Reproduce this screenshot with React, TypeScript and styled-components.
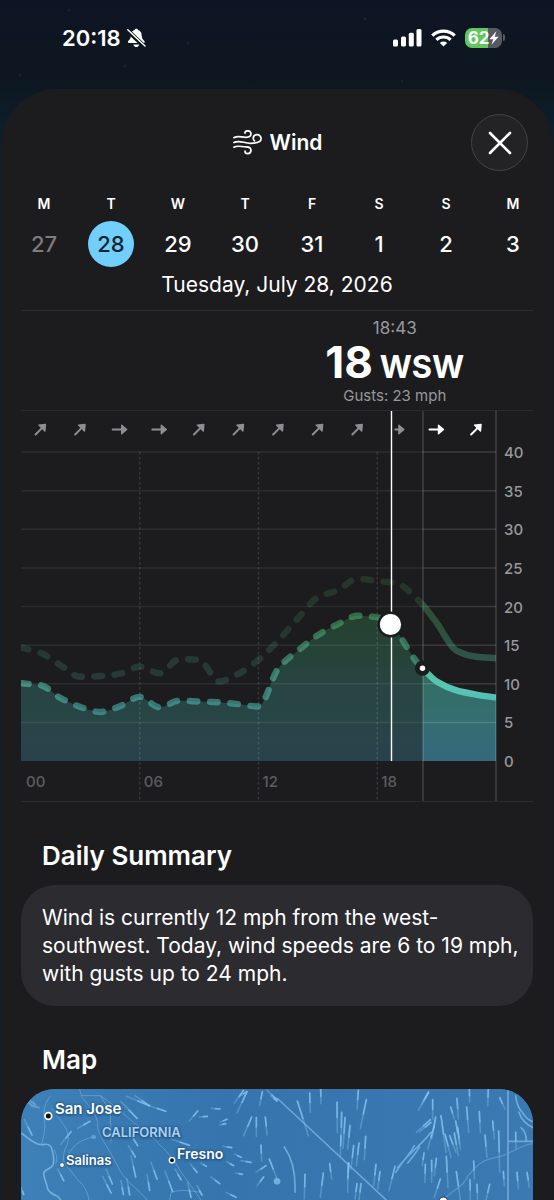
import React from "react";
import styled, { createGlobalStyle } from "styled-components";

const colors = {
  sheet: "#1c1c1e",
  card: "#2c2b30",
  text: "#ffffff",
  muted: "#98989d",
  faint: "#5c5c60",
  line: "#2b2b2e",
  accent: "#70cffb",
};

const GlobalStyle = createGlobalStyle`
  *, *::before, *::after { box-sizing: border-box; }
  html, body { margin: 0; padding: 0; background: #0e1722; }
  body {
    font-family: Inter, "Liberation Sans", sans-serif;
    color: ${colors.text};
    -webkit-font-smoothing: antialiased;
  }
  h1, h2, p { margin: 0; }
  button { font: inherit; color: inherit; background: none; border: 0; padding: 0; }
`;

const Screen = styled.div`
  display: flex;
  flex-direction: column;
  min-height: 100vh;
  overflow: hidden;
  background:
    radial-gradient(circle at 69px 10px, #1d2a3a 0, transparent 2px),
    radial-gradient(circle at 188px 43px, #1d2d3a 0, transparent 2px),
    radial-gradient(circle at 20px 75px, #1c2c36 0, transparent 2px),
    radial-gradient(circle at 125px 66px, #1a2a36 0, transparent 2px),
    radial-gradient(circle at 365px 19px, #1d2a3a 0, transparent 2px),
    radial-gradient(circle at 402px 81px, #182a36 0, transparent 2px),
    linear-gradient(#0f1424 0, #0d1720 80px, #0c1f2b 130px, #0c1f2b 100%);
`;

const StatusBar = styled.header`
  display: flex;
  flex: none;
  align-items: center;
  justify-content: space-between;
  height: 89px;
  padding: 0 49px 14px 62px;
`;

const StatusGroup = styled.div<{ $gap: number }>`
  display: flex;
  align-items: center;
  gap: ${(p) => p.$gap}px;
`;

const Clock = styled.time`
  font-size: 22px;
  line-height: 26px;
  font-weight: 600;
`;

const Sheet = styled.main`
  flex: 1;
  display: flex;
  flex-direction: column;
  margin: 0 1px;
  padding: 0 20px;
  border-radius: 56px 56px 0 0;
  background: ${colors.sheet};
`;

const TitleBar = styled.div`
  display: grid;
  grid-template-columns: 1fr auto 1fr;
  align-items: center;
  padding: 25px 5px 0 6px;
`;

const Title = styled.h1`
  grid-column: 2;
  display: flex;
  align-items: center;
  gap: 8px;
  font-size: 21px;
  line-height: 28px;
  font-weight: 600;
`;

const CloseButton = styled.button`
  justify-self: end;
  display: grid;
  place-items: center;
  width: 57px;
  height: 57px;
  border: 1px solid #434346;
  border-radius: 50%;
  background: #232325;
`;

const Week = styled.div`
  display: flex;
  justify-content: space-between;
  margin: 0 -3px 0 0;
  padding-top: 24px;
`;

const Day = styled.button<{ $past?: boolean }>`
  display: flex;
  flex-direction: column;
  align-items: center;
  gap: 8px;
  color: ${(p) => (p.$past ? "#7c7c80" : colors.text)};
`;

const Weekday = styled.span`
  font-size: 14px;
  line-height: 18px;
  font-weight: 600;
  color: ${colors.text};
`;

const DayNumber = styled.span<{ $selected?: boolean }>`
  display: grid;
  place-items: center;
  width: 46px;
  height: 46px;
  border-radius: 50%;
  font-size: 22px;
  font-weight: 500;
  background: ${(p) => (p.$selected ? colors.accent : "transparent")};
  color: ${(p) => (p.$selected ? "#14222c" : "inherit")};
`;

const FullDate = styled.p`
  margin-top: 5px;
  text-align: center;
  font-size: 21px;
  line-height: 26px;
`;

const Readout = styled.section`
  display: flex;
  flex-direction: column;
  align-items: center;
  margin-top: 12px;
  padding: 7px 0 4px 46%;
  border-top: 1px solid ${colors.line};
`;

const Caption = styled.span<{ $small?: boolean }>`
  font-size: ${(p) => (p.$small ? 15 : 17)}px;
  line-height: 20px;
  color: ${colors.muted};
`;

const Speed = styled.strong`
  display: flex;
  align-items: baseline;
  justify-content: center;
  gap: 7px;
  font-size: 44px;
  line-height: 48px;
  font-weight: 700;
`;

const Direction = styled.span`
  font-size: 31px;
  line-height: 32px;
`;

const ChartSvg = styled.svg`
  display: block;
  width: 100%;
  height: auto;
  flex: none;
  font-size: 15px;
  font-weight: 500;
`;

const SectionTitle = styled.h2`
  margin: 38px 21px 13px;
  font-size: 26px;
  line-height: 32px;
  font-weight: 600;
`;

const Card = styled.p`
  padding: 19px 12px 18px 21px;
  border-radius: 34px;
  background: ${colors.card};
  font-size: 21px;
  line-height: 28px;
`;

const MapCard = styled.section`
  position: relative;
  flex: 1;
  min-height: 111px;
  overflow: hidden;
  border-radius: 34px 34px 0 0;
  background: #3776ae;
`;

const MapSvg = styled.svg`
  display: block;
  width: 100%;
  height: 111px;
  min-height: 100%;
`;

const Place = styled.span<{ $x: number; $y: number; $size: number; $state?: boolean }>`
  position: absolute;
  left: ${(p) => p.$x}px;
  top: ${(p) => p.$y}px;
  font-size: ${(p) => p.$size}px;
  line-height: 18px;
  font-weight: 600;
  color: ${(p) => (p.$state ? "#a9d3f4" : "#ffffff")};
  text-shadow: 0 0 3px #1d4a76, 0 1px 3px #1d4a76;
`;

/* ---------- status icons ---------- */

const BellOff = () => (
  <svg width="19" height="20" viewBox="0 0 19 20" aria-label="Silent">
    <path
      d="M9.300 .7c-.9 0-1.500.5-1.700 1.300C5 2.800 4 5 3.900 7.300c-.1 2.700-.8 4-2.200 5.300-.5.5-.8.9-.8 1.400 0 .7.500 1.100 1.300 1.100h14.200c.8 0 1.300-.4 1.300-1.100 0-.5-.3-.9-.8-1.400-1.400-1.300-2.100-2.600-2.200-5.300C14.600 5 13.600 2.800 11 2 10.800 1.200 10.200.7 9.300.7z"
      fill="#fff"
    />
    <path d="M6.400 16.500h5.800c-.3 1.500-1.400 2.600-2.900 2.600s-2.600-1.100-2.900-2.600z" fill="#fff" />
    <path d="M-.5 1.500 18 19" stroke="#0e1622" strokeWidth="4.400" />
    <path d="M.8 1.800 18 18" stroke="#fff" strokeWidth="1.500" strokeLinecap="round" />
  </svg>
);

const Signal = () => (
  <svg width="29" height="18" viewBox="0 0 29 18" fill="#fff" aria-label="Signal">
    <rect x="0" y="10.500" width="5" height="7" rx="1.500" />
    <rect x="8" y="7.500" width="5" height="10" rx="1.500" />
    <rect x="15.800" y="3.800" width="5" height="13.700" rx="1.500" />
    <rect x="23.500" y="0" width="5" height="17.500" rx="1.500" />
  </svg>
);

const Wifi = () => (
  <svg width="25" height="18" viewBox="0 0 25 18" fill="none" stroke="#fff" strokeWidth="3.200" aria-label="Wi-Fi">
    <path d="M1.300 6.600a16 16 0 0 1 22.400 0" />
    <path d="M5.400 10.900a10.200 10.200 0 0 1 14.200 0" />
    <path d="M12.500 17.600 8.800 13.900a5.400 5.400 0 0 1 7.400 0z" fill="#fff" stroke="none" />
  </svg>
);

const BatteryShell = styled.div`
  display: flex;
  align-items: center;
  justify-content: center;
  width: 37px;
  height: 20px;
  border-radius: 7px;
  background: linear-gradient(90deg, #5fc95c 62%, #56595f 62%);
  font-size: 17px;
  line-height: 20px;
  font-weight: 700;
`;

const BatteryWrap = styled.div`
  display: flex;
  align-items: center;
  gap: 1px;
`;

const BatteryTip = styled.span`
  width: 2px;
  height: 7px;
  border-radius: 0 2px 2px 0;
  background: #56595f;
`;

const Battery = () => (
  <BatteryWrap>
    <BatteryShell>
      62
      <svg width="10" height="14" viewBox="0 0 10 14" aria-hidden="true">
        <path d="M7.400.3.400 8.200h3.900L2.400 13.700 9.600 5.800H5.600z" fill="#fff" />
      </svg>
    </BatteryShell>
    <BatteryTip />
  </BatteryWrap>
);

const WindIcon = () => (
  <svg width="29" height="25" viewBox="0 0 29 25" fill="none" stroke="#fff" strokeWidth="1.700" strokeLinecap="round" aria-hidden="true">
    <path d="M.9 7.700C5.300 5.200 8.500 7.500 13 7.300c3-.1 5-1.400 5-3.600 0-1.700-1.400-2.900-3.200-2.900-1.600 0-2.800 1-2.800 2.300" />
    <path d="M.9 12.400C6.500 9.800 11 13.300 17.500 13.300c6.500 0 10.600-1.100 10.600-4.800 0-2.200-1.800-3.800-4-3.800s-3.900 1.500-3.900 3.600c0 1.200.5 2 1.300 2.600" />
    <path d="M.9 17.200C5 15 8.500 16.900 13 16.900c2.800 0 5 1.200 5 3.400 0 1.900-1.400 3.300-3.200 3.300-1.600 0-2.800-1-2.800-2.400" />
  </svg>
);

const CloseIcon = () => (
  <svg width="24" height="24" viewBox="0 0 24 24" aria-hidden="true">
    <path d="M2 2 22 22M22 2 2 22" stroke="#fff" strokeWidth="2.600" strokeLinecap="round" />
  </svg>
);

/* ---------- chart ---------- */

type Point = [number, number];

const wind: Point[] = [
  [0, 10.06], [1, 9.8], [2, 8.15], [3, 7], [4, 6.35], [5, 7.1], [6, 8.3], [7, 6.95], [8, 7.8],
  [9, 7.7], [10, 7.6], [11, 7.35], [12, 7.05], [13, 12], [14, 14.3], [15, 16.3], [16, 17.7],
  [17, 18.8], [18, 18.6], [18.7, 17.6], [19, 16.7], [20, 12.8], [20.3, 12], [21, 10.3],
  [22, 9.15], [23, 8.6], [24, 8.2],
];

const gusts: Point[] = [
  [0, 14.7], [1, 14], [2, 12.4], [3, 10.9], [4, 11], [5, 11.3], [6, 12.2], [7, 11.35],
  [8, 13.2], [9, 13.1], [10, 10.3], [11, 11.3], [12, 13.1], [13, 15.6], [14, 18.5], [15, 21.2],
  [16, 22.1], [17, 23.6], [18, 23.3], [19, 23], [20, 21], [20.3, 20.2], [21, 17.9], [22, 14.3],
  [23, 13.5], [24, 13.3],
];

const PLOT_W = 475;
const PLOT_TOP = 42;
const PLOT_BOTTOM = 351;
const CHART_H = 392;
const NOW = 402;
const CURSOR = 370;

const px = (hour: number) => (hour / 24) * PLOT_W;
const py = (mph: number) => PLOT_BOTTOM - (mph / 40) * (PLOT_BOTTOM - PLOT_TOP);

/* Monotone cubic path, so the line never swings past its samples. */
function smooth(points: Point[]): string {
  const p = points.map(([h, v]): Point => [px(h), py(v)]);
  const n = p.length;
  const d = p.slice(1).map((q, i) => (q[1] - p[i][1]) / (q[0] - p[i][0]));
  const m = p.map((_, i) => {
    if (i === 0) return d[0];
    if (i === n - 1) return d[n - 2];
    if (d[i - 1] * d[i] <= 0) return 0;
    return (2 * d[i - 1] * d[i]) / (d[i - 1] + d[i]);
  });
  let out = `M${p[0][0]} ${p[0][1]}`;
  for (let i = 0; i < n - 1; i++) {
    const dx = (p[i + 1][0] - p[i][0]) / 3;
    out += `C${p[i][0] + dx} ${p[i][1] + m[i] * dx} ${p[i + 1][0] - dx} ${p[i + 1][1] - m[i + 1] * dx} ${p[i + 1][0]} ${p[i + 1][1]}`;
  }
  return out;
}

const windPath = smooth(wind);
const gustPath = smooth(gusts);
const areaPath = `${windPath}V${PLOT_BOTTOM}H0Z`;

/* Heading of each two-hour arrow: 0 points east, -45 north-east. */
const headings = [-45, -45, 0, 0, -45, -45, -45, -45, -45, 0, 0, -45];

const Chart = () => (
  <ChartSvg viewBox={`0 0 512 ${CHART_H}`} role="img" aria-label="Wind speed and gusts by hour">
    <defs>
      <linearGradient id="line" gradientUnits="userSpaceOnUse" x1="0" x2="0" y1={py(24)} y2={py(6)}>
        <stop offset="0" stopColor="#4fa85a" />
        <stop offset=".3" stopColor="#4cab69" />
        <stop offset=".6" stopColor="#51b795" />
        <stop offset=".8" stopColor="#58c7b5" />
        <stop offset="1" stopColor="#4cb3b8" />
      </linearGradient>
      <linearGradient id="area" gradientUnits="userSpaceOnUse" x1="0" x2="0" y1={py(19)} y2={PLOT_BOTTOM}>
        <stop offset="0" stopColor="#379358" />
        <stop offset=".3" stopColor="#3c9a74" />
        <stop offset=".5" stopColor="#42a095" />
        <stop offset=".7" stopColor="#43a0a0" />
        <stop offset="1" stopColor="#4497b8" />
      </linearGradient>
      <clipPath id="past"><rect x="0" y="0" width={NOW} height={CHART_H} /></clipPath>
      <clipPath id="future"><rect x={NOW} y="0" width={PLOT_W - NOW} height={CHART_H} /></clipPath>
    </defs>

    <g stroke={colors.line} strokeWidth="1">
      <path d="M0 .5H512M0 391.500H512" />
    </g>

    <path d={areaPath} fill="url(#area)" opacity=".31" clipPath="url(#past)" />
    <path d={areaPath} fill="url(#area)" opacity=".62" clipPath="url(#future)" />

    <g stroke="#fff" strokeOpacity=".075" strokeWidth="1.500">
      {[5, 10, 15, 20, 25, 30, 35, 40].map((v) => (
        <path key={v} d={`M0 ${py(v)}H${PLOT_W}`} />
      ))}
      {[5, 10, 15, 20, 25, 30, 35, 40].map((v) => (
        <path key={v} d={`M${NOW} ${py(v)}H${PLOT_W}`} />
      ))}
    </g>
    <g stroke="#fff" strokeOpacity=".12" strokeWidth="1.500" strokeDasharray="2.500 2.500">
      {[6, 12, 18].map((h) => (
        <path key={h} d={`M${px(h)} ${PLOT_TOP}V390`} />
      ))}
    </g>

    <g fill="none" stroke="url(#line)" strokeWidth="6.400">
      <path d={gustPath} opacity=".18" strokeLinecap="round" strokeDasharray="7.600 12.700" clipPath="url(#past)" />
      <path d={gustPath} opacity=".36" clipPath="url(#future)" />
      <path d={windPath} opacity=".55" strokeLinecap="round" strokeDasharray="7.600 12.700" clipPath="url(#past)" />
      <path d={windPath} clipPath="url(#future)" />
    </g>

    <g stroke="#fff" strokeOpacity=".17" strokeWidth="1.500">
      <path d={`M${NOW} 1V391M${PLOT_W} 1V391`} />
    </g>

    {headings.map((angle, i) => (
      <g
        key={i}
        transform={`translate(${19.5 + i * 39.6} 19.500) rotate(${angle})`}
        fill={i > 9 ? "#fff" : "#8e8e92"}
        stroke={i > 9 ? "#fff" : "#8e8e92"}
        strokeLinecap="round"
        strokeLinejoin="round"
      >
        <path d="M-7 0H3" strokeWidth="2" />
        <path d="M2 -4.200 7 0 2 4.200z" strokeWidth="1.400" />
      </g>
    ))}

    <path d={`M${CURSOR} 10V30`} stroke={colors.sheet} strokeWidth="7" />
    <path d={`M${CURSOR + 0.5} 1V${PLOT_BOTTOM}`} stroke="#fff" strokeWidth="1.400" />
    <circle cx={CURSOR - 0.5} cy="214.500" r="13" fill={colors.sheet} />
    <circle cx={CURSOR - 0.5} cy="214.500" r="10.600" fill="#fff" />
    <circle cx={NOW - 0.5} cy="258.200" r="7.600" fill={colors.sheet} />
    <circle cx={NOW - 0.5} cy="258.200" r="2.700" fill="#fff" />

    <g fill={colors.muted}>
      {[0, 5, 10, 15, 20, 25, 30, 35, 40].map((v) => (
        <text key={v} x="483" y={py(v) + 6}>{v}</text>
      ))}
    </g>
    <g fill={colors.faint}>
      {["00", "06", "12", "18"].map((h, i) => (
        <text key={h} x={px(i * 6) + (i === 0 ? 5 : 4)} y="377">{h}</text>
      ))}
    </g>
  </ChartSvg>
);

/* ---------- map ---------- */

/* Wind streaks as tail x, tail y, head x, head y; the head half is brighter. */
const streaks: number[][] = [
  [317, 22, 385, 50], [342, 20, 385, 50], [300, 38, 348, 88], [385, 50, 434, 67],
  [505, 96, 530, 66], [535, 84, 559, 82], [572, 58, 597, 60], [598, 99, 618, 91],
  [596, 108, 614, 104], [10, 92, 33, 138], [170, 118, 207, 97], [120, 165, 150, 128],
  [325, 130, 350, 170], [450, 150, 505, 169], [322, 170, 343, 204], [330, 200, 344, 264],
  [390, 220, 408, 270], [378, 256, 386, 304], [432, 246, 455, 308], [462, 240, 480, 272],
  [508, 225, 528, 250], [570, 264, 596, 284], [540, 222, 556, 232], [618, 218, 638, 230],
  [640, 195, 660, 205], [660, 215, 690, 220], [606, 172, 632, 176], [645, 252, 664, 256],
  [300, 275, 307, 316], [318, 270, 326, 318], [245, 262, 270, 312], [255, 240, 274, 285],
  [110, 240, 128, 275], [0, 296, 8, 316], [500, 280, 510, 325], [528, 290, 543, 318],
  [640, 42, 668, 4], [648, 72, 678, 8], [660, 20, 677, 8], [668, 140, 692, 84],
  [706, 142, 706, 86], [738, 138, 733, 84], [716, 50, 724, 8], [738, 4, 768, 32],
  [748, 20, 768, 36], [722, 216, 720, 168], [708, 290, 728, 264], [705, 250, 735, 230],
  [768, 270, 745, 210], [615, 310, 645, 325],
  [868, 70, 866, 12], [900, 44, 899, 0], [862, 140, 829, 36], [1008, 60, 1012, 4],
  [949, 130, 948, 40], [960, 160, 962, 70], [966, 178, 972, 86], [980, 180, 987, 110],
  [958, 200, 960, 140], [1018, 118, 1036, 32], [1030, 212, 1034, 142], [990, 240, 998, 170],
  [1006, 230, 1014, 162], [980, 272, 984, 222], [850, 330, 852, 256], [898, 325, 907, 252],
  [932, 270, 926, 224], [980, 310, 982, 222], [1002, 330, 1008, 284], [1014, 333, 1020, 284],
  [1058, 290, 1065, 226], [1070, 300, 1077, 248], [1104, 305, 1122, 232], [1192, 64, 1223, 8],
  [1202, 46, 1222, 12], [1235, 90, 1235, 32], [1186, 130, 1228, 92], [1196, 128, 1230, 100],
  [1232, 150, 1244, 84], [1220, 180, 1240, 110], [1275, 190, 1260, 80], [1300, 90, 1289, 54],
  [1312, 90, 1308, 28], [1316, 165, 1304, 96], [1343, 130, 1337, 54], [1346, 40, 1345, 0],
  [1290, 205, 1272, 136], [1312, 200, 1300, 132], [1305, 190, 1286, 140], [1318, 180, 1310, 115],
  [1378, 130, 1375, 68], [1400, 50, 1402, 0], [1420, 150, 1415, 96], [1398, 205, 1392, 138],
  [1436, 250, 1433, 126], [1452, 60, 1436, 26], [1485, 180, 1484, 130], [1450, 290, 1447, 248],
  [1492, 300, 1488, 250], [1525, 295, 1518, 250], [1212, 280, 1213, 226], [1232, 280, 1232, 214],
  [1240, 260, 1246, 208], [1204, 230, 1209, 192], [1281, 295, 1276, 202], [1360, 270, 1358, 216],
  [1318, 333, 1306, 248], [1348, 333, 1347, 272], [1370, 333, 1368, 286], [1395, 333, 1406, 286],
  [1240, 325, 1258, 270],
];

const MapDrawing = () => (
  <MapSvg viewBox="0 0 1536 333" preserveAspectRatio="xMinYMin slice" role="img" aria-label="Wind map of California">
    <defs>
      <linearGradient id="land" x1="0" x2="1" y1="0" y2="0">
        <stop offset="0" stopColor="#3e80b8" />
        <stop offset=".4" stopColor="#3574ac" />
        <stop offset="1" stopColor="#3a79b1" />
      </linearGradient>
    </defs>
    <rect width="1536" height="333" fill="url(#land)" />
    <g fill="none" stroke="#83b9e4" strokeOpacity=".5" strokeWidth="3">
      <path
        d="M0 132C12 140 25 152 40 160 50 168 60 168 72 166 84 164 92 172 94 186 98 200 100 214 96 228 90 242 72 238 68 252 66 264 76 276 80 300 88 314 100 318 110 322L120 333"
        strokeWidth="5"
        strokeOpacity=".8"
      />
      <path d="M88 20C74 40 66 60 70 90 74 120 68 140 62 166M92 58 130 110C150 140 140 170 132 180 124 210 126 222 140 234L170 272C190 290 200 310 204 333M104 224C112 205 102 190 100 182" />
      <path d="M176 0 182 24 220 70 230 100C226 120 236 140 262 180L300 250C320 280 360 310 378 333M182 20H238L268 70 270 160M238 20C300 60 340 110 380 130 430 180 460 210 474 240L540 333" />
      <path d="M140 200C160 160 190 150 216 144M450 310C480 300 510 306 540 310M450 310 446 333" />
      <path d="M20 40 34 50M24 34 46 48M30 50 56 56M36 36 42 56" strokeWidth="6" />
    </g>
    <g fill="none" stroke="#7db2de" strokeOpacity=".8" strokeWidth="5">
      <path d="M768 27 1096 333M1461 0V333M1461 157H1536" />
    </g>
    <path d="M1266 333C1300 300 1330 290 1340 262 1380 210 1400 212 1430 204 1470 196 1490 170 1536 164" fill="none" stroke="#6aa6d8" strokeOpacity=".6" strokeWidth="4" />
    <g fill="none" stroke="#83c0ee" strokeWidth="5" strokeLinecap="round" strokeLinejoin="round">
      {streaks.map(([x1, y1, x2, y2], i) => (
        <g key={i}>
          <path d={`M${x1} ${y1}L${x2} ${y2}`} strokeOpacity=".38" />
          <path d={`M${(x1 + x2) / 2} ${(y1 + y2) / 2}L${x2} ${y2}`} strokeOpacity=".75" />
        </g>
      ))}
      <path d="M822 310C824 260 815 210 790 174M1125 250C1140 220 1165 200 1180 170M1160 222C1175 205 1185 190 1196 174M1130 236C1160 196 1200 170 1230 130M1494 70C1500 90 1512 105 1536 116M1504 70C1512 84 1524 94 1536 98M1500 116C1512 126 1516 140 1516 156M1484 20C1486 40 1490 56 1504 70" strokeOpacity=".7" />
    </g>
    <circle cx="768" cy="277" r="10" fill="#8cc8f2" opacity=".7" />
    <circle cx="218" cy="144" r="7" fill="#6aa6d8" opacity=".8" />
    <circle cx="82" cy="81" r="10" fill="#111" stroke="#fff" strokeWidth="5" />
    <circle cx="453" cy="214" r="8" fill="#111" stroke="#fff" strokeWidth="4" />
    <circle cx="123" cy="228" r="7" fill="#fff" stroke="#1d4a76" strokeWidth="2" />
    <circle cx="1267" cy="337" r="13" fill="#fff" stroke="#14304d" strokeWidth="3" />
  </MapSvg>
);

/* ---------- page ---------- */

const days = [
  { letter: "M", date: 27, past: true },
  { letter: "T", date: 28, selected: true },
  { letter: "W", date: 29 },
  { letter: "T", date: 30 },
  { letter: "F", date: 31 },
  { letter: "S", date: 1 },
  { letter: "S", date: 2 },
  { letter: "M", date: 3 },
];

export default function App() {
  return (
    <>
      <GlobalStyle />
      <Screen>
        <StatusBar>
          <StatusGroup $gap={6}>
            <Clock>20:18</Clock>
            <BellOff />
          </StatusGroup>
          <StatusGroup $gap={9}>
            <Signal />
            <Wifi />
            <Battery />
          </StatusGroup>
        </StatusBar>

        <Sheet>
          <TitleBar>
            <Title>
              <WindIcon />
              Wind
            </Title>
            <CloseButton type="button" aria-label="Close">
              <CloseIcon />
            </CloseButton>
          </TitleBar>

          <Week>
            {days.map((d) => (
              <Day key={d.date} type="button" $past={d.past} aria-pressed={!!d.selected}>
                <Weekday>{d.letter}</Weekday>
                <DayNumber $selected={d.selected}>{d.date}</DayNumber>
              </Day>
            ))}
          </Week>
          <FullDate>Tuesday, July 28, 2026</FullDate>

          <Readout>
            <Caption>18:43</Caption>
            <Speed>
              18 <Direction>WSW</Direction>
            </Speed>
            <Caption $small>Gusts: 23 mph</Caption>
          </Readout>
          <Chart />

          <SectionTitle>Daily Summary</SectionTitle>
          <Card>
            Wind is currently 12 mph from the west-southwest. Today, wind speeds are 6 to 19 mph,
            with gusts up to 24 mph.
          </Card>

          <SectionTitle>Map</SectionTitle>
          <MapCard>
            <MapDrawing />
            <Place $x={34} $y={11} $size={15}>San Jose</Place>
            <Place $x={81} $y={34} $size={13} $state>CALIFORNIA</Place>
            <Place $x={45} $y={62} $size={13}>Salinas</Place>
            <Place $x={156} $y={56} $size={14}>Fresno</Place>
          </MapCard>
        </Sheet>
      </Screen>
    </>
  );
}
